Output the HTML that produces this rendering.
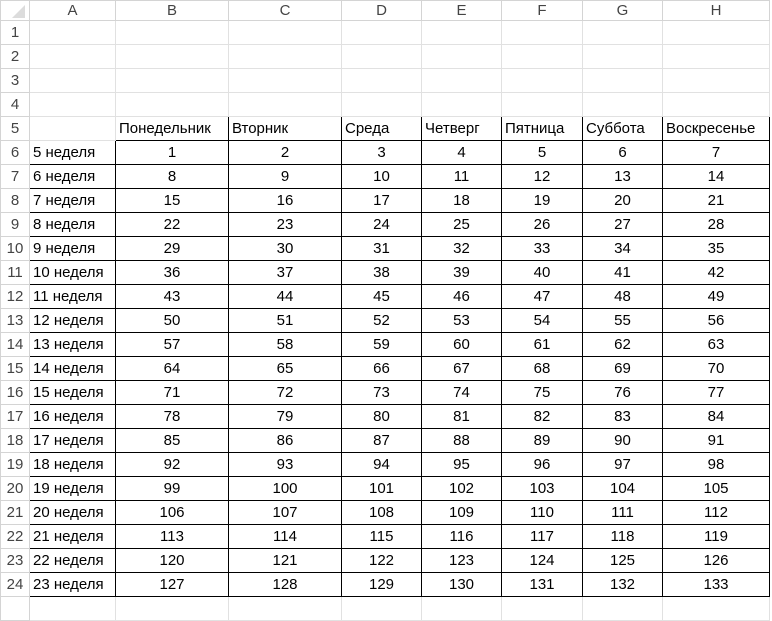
<!DOCTYPE html>
<html><head><meta charset="utf-8"><style>
body{margin:0;background:#fff;width:772px;height:601px;overflow:hidden;font-family:"Liberation Sans",sans-serif;}
table{border-collapse:collapse;table-layout:fixed;position:absolute;left:0;top:0;width:769px;}
td{height:24px;padding:0;text-indent:3px;border:1px solid #e1e1e1;font-size:15px;color:#000;white-space:nowrap;overflow:hidden;box-sizing:border-box;}
tr.h td{height:20px;color:#444;text-align:center;text-indent:0;font-size:15px;border-color:#d4d4d4;background:#fff;}
td.n{color:#444;text-align:center;text-indent:0;font-size:15px;border-color:#d4d4d4;}
td.b{border:1px solid #000;}
td.c{text-align:center;text-indent:0;}
</style></head><body>
<table>
<colgroup><col style="width:29px"><col style="width:86px"><col style="width:113px"><col style="width:113px"><col style="width:80px"><col style="width:80px"><col style="width:81px"><col style="width:80px"><col style="width:107px"></colgroup>
<tr class="h"><td><svg width="20" height="16" style="display:block;margin-left:6px"><polygon points="18,2 18,15 5,15" fill="#dcdcdc"/></svg></td><td>A</td><td>B</td><td>C</td><td>D</td><td>E</td><td>F</td><td>G</td><td>H</td></tr>
<tr><td class="n">1</td><td></td><td></td><td></td><td></td><td></td><td></td><td></td><td></td></tr>
<tr><td class="n">2</td><td></td><td></td><td></td><td></td><td></td><td></td><td></td><td></td></tr>
<tr><td class="n">3</td><td></td><td></td><td></td><td></td><td></td><td></td><td></td><td></td></tr>
<tr><td class="n">4</td><td></td><td></td><td></td><td></td><td></td><td></td><td></td><td></td></tr>
<tr><td class="n">5</td><td></td><td class="b">Понедельник</td><td class="b">Вторник</td><td class="b">Среда</td><td class="b">Четверг</td><td class="b">Пятница</td><td class="b">Суббота</td><td class="b">Воскресенье</td></tr>
<tr><td class="n">6</td><td class="b">5 неделя</td><td class="b c">1</td><td class="b c">2</td><td class="b c">3</td><td class="b c">4</td><td class="b c">5</td><td class="b c">6</td><td class="b c">7</td></tr>
<tr><td class="n">7</td><td class="b">6 неделя</td><td class="b c">8</td><td class="b c">9</td><td class="b c">10</td><td class="b c">11</td><td class="b c">12</td><td class="b c">13</td><td class="b c">14</td></tr>
<tr><td class="n">8</td><td class="b">7 неделя</td><td class="b c">15</td><td class="b c">16</td><td class="b c">17</td><td class="b c">18</td><td class="b c">19</td><td class="b c">20</td><td class="b c">21</td></tr>
<tr><td class="n">9</td><td class="b">8 неделя</td><td class="b c">22</td><td class="b c">23</td><td class="b c">24</td><td class="b c">25</td><td class="b c">26</td><td class="b c">27</td><td class="b c">28</td></tr>
<tr><td class="n">10</td><td class="b">9 неделя</td><td class="b c">29</td><td class="b c">30</td><td class="b c">31</td><td class="b c">32</td><td class="b c">33</td><td class="b c">34</td><td class="b c">35</td></tr>
<tr><td class="n">11</td><td class="b">10 неделя</td><td class="b c">36</td><td class="b c">37</td><td class="b c">38</td><td class="b c">39</td><td class="b c">40</td><td class="b c">41</td><td class="b c">42</td></tr>
<tr><td class="n">12</td><td class="b">11 неделя</td><td class="b c">43</td><td class="b c">44</td><td class="b c">45</td><td class="b c">46</td><td class="b c">47</td><td class="b c">48</td><td class="b c">49</td></tr>
<tr><td class="n">13</td><td class="b">12 неделя</td><td class="b c">50</td><td class="b c">51</td><td class="b c">52</td><td class="b c">53</td><td class="b c">54</td><td class="b c">55</td><td class="b c">56</td></tr>
<tr><td class="n">14</td><td class="b">13 неделя</td><td class="b c">57</td><td class="b c">58</td><td class="b c">59</td><td class="b c">60</td><td class="b c">61</td><td class="b c">62</td><td class="b c">63</td></tr>
<tr><td class="n">15</td><td class="b">14 неделя</td><td class="b c">64</td><td class="b c">65</td><td class="b c">66</td><td class="b c">67</td><td class="b c">68</td><td class="b c">69</td><td class="b c">70</td></tr>
<tr><td class="n">16</td><td class="b">15 неделя</td><td class="b c">71</td><td class="b c">72</td><td class="b c">73</td><td class="b c">74</td><td class="b c">75</td><td class="b c">76</td><td class="b c">77</td></tr>
<tr><td class="n">17</td><td class="b">16 неделя</td><td class="b c">78</td><td class="b c">79</td><td class="b c">80</td><td class="b c">81</td><td class="b c">82</td><td class="b c">83</td><td class="b c">84</td></tr>
<tr><td class="n">18</td><td class="b">17 неделя</td><td class="b c">85</td><td class="b c">86</td><td class="b c">87</td><td class="b c">88</td><td class="b c">89</td><td class="b c">90</td><td class="b c">91</td></tr>
<tr><td class="n">19</td><td class="b">18 неделя</td><td class="b c">92</td><td class="b c">93</td><td class="b c">94</td><td class="b c">95</td><td class="b c">96</td><td class="b c">97</td><td class="b c">98</td></tr>
<tr><td class="n">20</td><td class="b">19 неделя</td><td class="b c">99</td><td class="b c">100</td><td class="b c">101</td><td class="b c">102</td><td class="b c">103</td><td class="b c">104</td><td class="b c">105</td></tr>
<tr><td class="n">21</td><td class="b">20 неделя</td><td class="b c">106</td><td class="b c">107</td><td class="b c">108</td><td class="b c">109</td><td class="b c">110</td><td class="b c">111</td><td class="b c">112</td></tr>
<tr><td class="n">22</td><td class="b">21 неделя</td><td class="b c">113</td><td class="b c">114</td><td class="b c">115</td><td class="b c">116</td><td class="b c">117</td><td class="b c">118</td><td class="b c">119</td></tr>
<tr><td class="n">23</td><td class="b">22 неделя</td><td class="b c">120</td><td class="b c">121</td><td class="b c">122</td><td class="b c">123</td><td class="b c">124</td><td class="b c">125</td><td class="b c">126</td></tr>
<tr><td class="n">24</td><td class="b">23 неделя</td><td class="b c">127</td><td class="b c">128</td><td class="b c">129</td><td class="b c">130</td><td class="b c">131</td><td class="b c">132</td><td class="b c">133</td></tr>
<tr><td class="n"></td><td></td><td></td><td></td><td></td><td></td><td></td><td></td><td></td></tr>
</table>
</body></html>
